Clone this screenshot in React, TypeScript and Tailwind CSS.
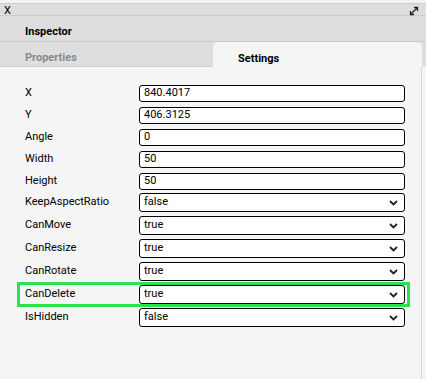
import { useState } from "react";

type Field =
  | { label: string; kind: "input"; value: string }
  | { label: string; kind: "select"; value: string };

const fields: Field[] = [
  { label: "X", kind: "input", value: "840.4017" },
  { label: "Y", kind: "input", value: "406.3125" },
  { label: "Angle", kind: "input", value: "0" },
  { label: "Width", kind: "input", value: "50" },
  { label: "Height", kind: "input", value: "50" },
  { label: "KeepAspectRatio", kind: "select", value: "false" },
  { label: "CanMove", kind: "select", value: "true" },
  { label: "CanResize", kind: "select", value: "true" },
  { label: "CanRotate", kind: "select", value: "true" },
  { label: "CanDelete", kind: "select", value: "true" },
  { label: "IsHidden", kind: "select", value: "false" },
];

export default function App() {
  const [tab, setTab] = useState<"properties" | "settings">("settings");

  return (
    <div className="flex h-[379px] w-[426px] flex-col overflow-hidden bg-[#f5f5f5] font-['Roboto',sans-serif] text-[11px] text-black">
      <div className="h-[3px] bg-[#f3f3f3]" />
      <div className="flex h-[13px] items-center justify-between border-y border-[#cdcdcd] bg-[#dedede] pl-[4px] pr-[7px] pt-[2px] leading-none">
        <span className="text-[11px]">X</span>
        <ExpandIcon />
      </div>
      <div className="flex h-[26px] items-center border-b border-[#cbcbcb] bg-[#dedede] pl-[25px] pt-[8px] font-bold">
        Inspector
      </div>
      <div className="flex h-[25px] bg-[#dedede] pr-[4px]">
        <button
          onClick={() => setTab("properties")}
          className={
            tab === "properties"
              ? "flex w-[213px] items-center rounded-t-[5px] bg-[#f5f5f5] pl-[25px] pt-[10px] font-bold"
              : "flex w-[213px] items-center rounded-br-[5px] border-b border-[#cfcfcf] pl-[25px] pt-[9px] font-bold text-[#8a8a8a]"
          }
        >
          Properties
        </button>
        <button
          onClick={() => setTab("settings")}
          className={
            tab === "settings"
              ? "flex flex-1 items-center rounded-t-[5px] bg-[#f5f5f5] pl-[25px] pt-[10px] font-bold"
              : "flex flex-1 items-center rounded-bl-[5px] border-b border-[#cfcfcf] pl-[25px] pt-[9px] font-bold text-[#8a8a8a]"
          }
        >
          Settings
        </button>
      </div>
      <div className="flex flex-1">
        <div className="w-[422px] border-r border-[#d6d6d6] pt-[18px]">
          {fields.map((f, i) => (
            <Row
              key={f.label}
              field={f}
              highlight={f.label === "CanDelete"}
              gap={i === 0 ? "" : f.label === "KeepAspectRatio" ? "mt-[3px]" : f.kind === "select" ? "mt-[4px]" : "mt-[5px]"}
            />
          ))}
        </div>
      </div>
    </div>
  );
}

function Row({ field, highlight, gap }: { field: Field; highlight: boolean; gap: string }) {
  const isSelect = field.kind === "select";
  return (
    <div
      className={
        (isSelect ? "h-[19px] " : "h-[17px] ") +
        gap +
        " ml-[20px] flex w-[387px] items-center pl-[5px] pr-[2px] " +
        (highlight ? "outline outline-[3px] outline-[#24e54d]" : "")
      }
    >
      <div className="w-[114px] shrink-0">{field.label}</div>
      <div className="flex h-full flex-1 items-center justify-between rounded-[3px] border border-black bg-white pl-[4px] pr-[6px]">
        <span>{field.value}</span>
        {isSelect && <Chevron />}
      </div>
    </div>
  );
}

function Chevron() {
  return (
    <svg width="9" height="6" viewBox="0 0 9 6" fill="none">
      <path d="M1 1l3.5 3.5L8 1" stroke="#222" strokeWidth="1.8" />
    </svg>
  );
}

function ExpandIcon() {
  return (
    <svg width="10" height="10" viewBox="0 0 10 10" fill="none">
      <path d="M2 8L8 2" stroke="#222" strokeWidth="1.3" />
      <path d="M5 1.5h3.5V5" stroke="#222" strokeWidth="1.3" />
      <path d="M1.5 5v3.5H5" stroke="#222" strokeWidth="1.3" />
    </svg>
  );
}
